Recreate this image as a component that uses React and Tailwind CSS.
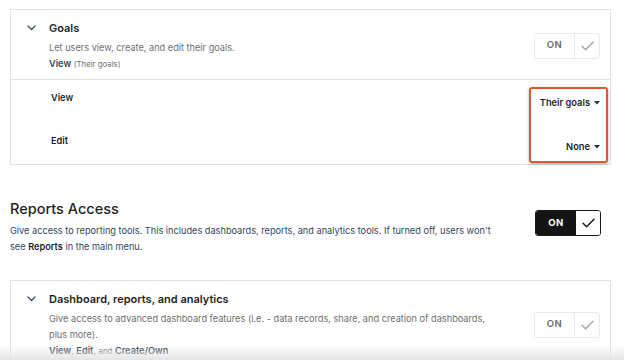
import React from "react";

const Chevron = () => (
  <svg width="9" height="6" viewBox="0 0 9 6" fill="none">
    <path d="M1 1l3.5 3.5L8 1" stroke="#33475b" strokeWidth="1.2" strokeLinecap="round" strokeLinejoin="round" />
  </svg>
);

const Check = ({ color = "#7c98b6", w = 1.3 }) => (
  <svg width="13" height="10" viewBox="0 0 13 10" fill="none">
    <path d="M1 5.2l3.6 3.6L12 1.2" stroke={color} strokeWidth={w} strokeLinecap="round" strokeLinejoin="round" />
  </svg>
);

const LightToggle = () => (
  <div className="flex h-[26px] w-[66px] shrink-0 rounded-[3px] border border-[#ebebeb] bg-white">
    <div className="flex w-[40px] items-center justify-center border-r border-[#ebebeb] text-[9.5px] font-semibold tracking-[0.5px] text-[#6b6b6b]">ON</div>
    <div className="flex flex-1 items-center justify-center">
      <Check color="#9aa0a6" />
    </div>
  </div>
);

const Caret = () => (
  <svg width="6" height="4" viewBox="0 0 6 4" className="ml-[4px]">
    <path d="M0 0h6L3 3.5z" fill="#213343" />
  </svg>
);

export default function App() {
  return (
    <div className="relative h-[360px] w-[624px] overflow-hidden bg-white text-[#213343]" style={{ fontFamily: "Inter, 'Noto Sans', sans-serif" }}>
      <div className="pl-[10px] pr-[13px] pt-[9px]">
        {/* Goals card */}
        <div className="border border-[#dfe3eb]">
          <div className="flex items-center pl-[16px] pr-[10px] pb-[7px] pt-[9px]">
            <div className="flex flex-1 self-start">
              <div className="flex h-[18px] w-[22px] items-center">
                <Chevron />
              </div>
              <div className="flex flex-col">
                <div className="h-[18px] text-[11px] font-semibold leading-[18px] text-[#1f1f1f]">Goals</div>
                <div className="mt-[3px] text-[9.2px] leading-[16px] text-[#6f6f6f]">Let users view, create, and edit their goals.</div>
                <div className="text-[9.2px] leading-[16px] text-[#6f6f6f]">
                  <span className="font-semibold text-[#33475b]">View</span> <span className="text-[7.8px]">(Their goals)</span>
                </div>
              </div>
            </div>
            <LightToggle />
          </div>
          <div className="flex flex-col border-t border-[#dfe3eb] pl-[40px] pr-[10px]">
            <div className="flex h-[53px] items-start pt-[10px]">
              <div className="flex-1 text-[9.2px] font-semibold leading-[16px] text-[#1f1f1f]">View</div>
              <div className="mt-[5px] flex items-center text-[9.3px] font-semibold leading-[16px] text-[#1f1f1f]">Their goals<Caret /></div>
            </div>
            <div className="flex h-[31px] items-start">
              <div className="flex-1 text-[9.2px] font-semibold leading-[16px] text-[#1f1f1f]">Edit</div>
              <div className="mt-[6px] flex items-center text-[9.3px] font-semibold leading-[16px] text-[#1f1f1f]">None<Caret /></div>
            </div>
          </div>
        </div>

        {/* Reports Access */}
        <div className="mt-[32px] flex items-start">
          <div className="flex-1">
            <div className="text-[14.5px] font-medium leading-[24px] text-[#1f1f1f]">Reports Access</div>
            <p className="mt-[2px] w-[490px] text-[9.2px] leading-[16px] text-[#33475b]">
              Give access to reporting tools. This includes dashboards, reports, and analytics tools. If turned off, users won't see <b className="font-semibold text-[#1f1f1f]">Reports</b> in the main menu.
            </p>
          </div>
          <div className="mr-[10px] mt-[13px] flex h-[26px] w-[66px] shrink-0 overflow-hidden rounded-[3px] border border-[#1a1a1a]">
            <div className="flex w-[40px] items-center justify-center bg-[#141414] text-[9.5px] font-bold tracking-[0.5px] text-white">ON</div>
            <div className="flex flex-1 items-center justify-center bg-white">
              <Check color="#1a1a1a" w={1.5} />
            </div>
          </div>
        </div>

        {/* Dashboard card */}
        <div className="mt-[25px] border border-[#dfe3eb]">
          <div className="flex items-center pl-[16px] pr-[10px] pb-[7px] pt-[9px]">
            <div className="flex flex-1 self-start">
              <div className="flex h-[18px] w-[22px] items-center">
                <Chevron />
              </div>
              <div className="flex w-[445px] flex-col">
                <div className="h-[18px] text-[11px] font-semibold leading-[18px] text-[#1f1f1f]">Dashboard, reports, and analytics</div>
                <div className="mt-[3px] text-[9.2px] leading-[16px] text-[#6f6f6f]">Give access to advanced dashboard features (i.e. - data records, share, and creation of dashboards, plus more).</div>
                <div className="text-[9.2px] leading-[16px] text-[#6f6f6f]">
                  <span className="font-semibold text-[#33475b]">View</span>, <span className="font-semibold text-[#33475b]">Edit</span>, <span className="text-[7.8px]">and</span> <span className="font-semibold text-[#33475b]">Create/Own</span>
                </div>
              </div>
            </div>
            <LightToggle />
          </div>
        </div>
      </div>

      {/* annotation highlight */}
      <div className="absolute left-[529px] top-[87px] h-[76px] w-[79px] rounded-[3px] border-2 border-[#e0572f] shadow-[0_1px_3px_rgba(0,0,0,0.35)]" />

      {/* bottom fade */}
      <div className="pointer-events-none absolute bottom-0 left-0 h-[14px] w-[624px] bg-gradient-to-b from-transparent to-[#e4e4e4]" />
    </div>
  );
}
